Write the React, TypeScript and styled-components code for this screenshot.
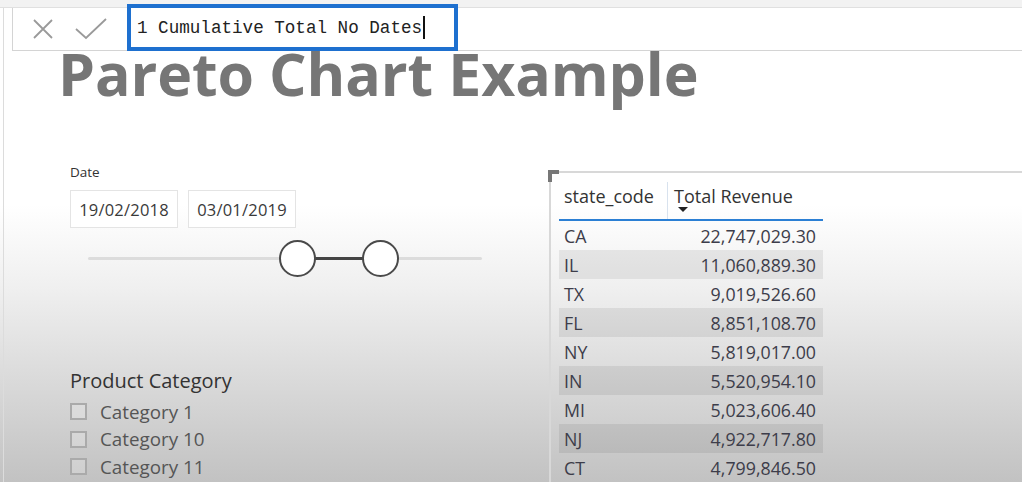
import styled, { createGlobalStyle } from "styled-components";

const GlobalStyle = createGlobalStyle`
	html, body {
		margin: 0;
		padding: 0;
	}
	body {
		width: 1022px;
		height: 482px;
		overflow: hidden;
		font-family: "Open Sans", "Noto Sans", sans-serif;
		background: linear-gradient(
			to bottom,
			#ffffff 0px,
			#ffffff 205px,
			#efefef 290px,
			#c2c2c2 482px
		);
	}
`;

const Page = styled.div`
	display: flex;
	flex-direction: column;
	height: 482px;
	border-left: 1px solid #dcdcdc;
	margin-left: 3px;
`;

const TopStrip = styled.div`
	height: 8px;
	background: #f2f2f2;
	border-bottom: 1px solid #e0e0e0;
	margin-left: -4px;
`;

const FormulaBar = styled.div`
	display: flex;
	align-items: stretch;
	height: 42px;
	margin-left: 8px;
	background: #fff;
	border: 1px solid #d4d4d4;
	border-right: none;
	border-top: none;
`;

const IconButton = styled.div<{ $width: number }>`
	width: ${(p) => p.$width}px;
	display: flex;
	align-items: center;
	justify-content: center;
`;

const FormulaInput = styled.div`
	box-sizing: border-box;
	width: 331px;
	height: 47px;
	margin-top: -4px;
	margin-left: 18px;
	border: 4px solid #1e70cf;
	display: flex;
	align-items: center;
	padding-left: 6px;
	font-family: "Liberation Mono", "DejaVu Sans Mono", monospace;
	font-size: 17.6px;
	line-height: 20px;
	color: #222;
	white-space: pre;
`;

const Caret = styled.span`
	display: inline-block;
	width: 2px;
	height: 23px;
	background: #111;
	margin-left: 1px;
`;

const Canvas = styled.div`
	flex: 1;
	display: flex;
	flex-direction: column;
	padding-left: 54px;
`;

const Title = styled.h1`
	margin: 0;
	font-family: "Open Sans", "Noto Sans", sans-serif;
	font-weight: 700;
	font-size: 59px;
	line-height: 44px;
	letter-spacing: -0.1px;
	color: #767676;
`;

const Body = styled.div`
	display: flex;
	margin-top: 68px;
`;

const LeftPanel = styled.div`
	width: 479px;
	padding-left: 12px;
	display: flex;
	flex-direction: column;
`;

const Label = styled.div`
	font-size: 13.5px;
	color: #333;
	height: 18px;
	line-height: 18px;
`;

const DateRow = styled.div`
	display: flex;
	gap: 10px;
	margin-top: 9px;
`;

const DateBox = styled.div`
	box-sizing: border-box;
	width: 108px;
	height: 38px;
	background: #fff;
	border: 1px solid #e4e4e4;
	display: flex;
	align-items: center;
	justify-content: center;
	font-size: 16.5px;
	letter-spacing: 0.2px;
	color: #3a3a3a;
`;

const SliderWrap = styled.div`
	position: relative;
	margin: 12px 0 0 18px;
	width: 394px;
	height: 38px;
`;

const Track = styled.div`
	position: absolute;
	left: 0;
	right: 0;
	top: 17px;
	height: 3px;
	border-radius: 2px;
	background: #dcdcdc;
`;

const Range = styled.div`
	position: absolute;
	top: 17px;
	height: 3px;
	background: #444;
`;

const Thumb = styled.div`
	position: absolute;
	top: 0;
	box-sizing: border-box;
	width: 37px;
	height: 37px;
	margin-left: -18px;
	border-radius: 50%;
	border: 2px solid #4a4a4a;
	background: #fff;
`;

const CategoryTitle = styled.div`
	margin-top: 91px;
	font-size: 20px;
	color: #333;
	line-height: 24px;
`;

const CategoryList = styled.div`
	display: flex;
	flex-direction: column;
	margin-top: 5px;
`;

const CategoryItem = styled.div`
	display: flex;
	align-items: center;
	gap: 13px;
	height: 27.5px;
	font-size: 18.8px;
	color: #555;
`;

const Box = styled.span`
	box-sizing: border-box;
	width: 17px;
	height: 17px;
	border: 2px solid #aaa;
	background: rgba(255, 255, 255, 0.2);
`;

const TableVisual = styled.div`
	position: relative;
	flex: 1;
	border-top: 2px solid #d8d8d8;
	border-left: 2px solid #d8d8d8;
	padding: 9px 0 0 8px;
	margin-top: 8px;
`;

const Corner = styled.div`
	position: absolute;
	left: -3px;
	top: -3px;
	width: 11px;
	height: 12px;
	border-left: 4px solid #777;
	border-top: 4px solid #777;
	box-sizing: border-box;
`;

const Table = styled.div`
	width: 264px;
	display: flex;
	flex-direction: column;
`;

const HeaderRow = styled.div`
	display: grid;
	grid-template-columns: 108px 1fr;
	height: 37px;
	border-bottom: 2px solid #2b7fd4;
	font-size: 18px;
	color: #333;
`;

const HeaderCell = styled.div<{ $divider?: boolean }>`
	position: relative;
	padding: 2px 0 0 ${(p) => (p.$divider ? 6 : 5)}px;
	border-left: ${(p) => (p.$divider ? "1px solid #d8e2ee" : "none")};
`;

const SortArrow = styled.span`
	position: absolute;
	left: 10px;
	top: 25px;
	width: 0;
	height: 0;
	border-left: 5px solid transparent;
	border-right: 5px solid transparent;
	border-top: 5px solid #222;
`;

const Row = styled.div<{ $shade: boolean }>`
	display: grid;
	grid-template-columns: 108px 1fr;
	height: 29px;
	align-items: center;
	font-size: 17.8px;
	color: #3d3d4a;
	background: ${(p) => (p.$shade ? "rgba(0, 0, 0, 0.07)" : "transparent")};
`;

const Cell = styled.div<{ $right?: boolean }>`
	padding: 0 ${(p) => (p.$right ? 7 : 0)}px 0 ${(p) => (p.$right ? 0 : 5)}px;
	text-align: ${(p) => (p.$right ? "right" : "left")};
`;

const rows: [string, string][] = [
	["CA", "22,747,029.30"],
	["IL", "11,060,889.30"],
	["TX", "9,019,526.60"],
	["FL", "8,851,108.70"],
	["NY", "5,819,017.00"],
	["IN", "5,520,954.10"],
	["MI", "5,023,606.40"],
	["NJ", "4,922,717.80"],
	["CT", "4,799,846.50"],
];

const categories = ["Category 1", "Category 10", "Category 11"];

function CrossIcon() {
	return (
		<svg width="22" height="22" viewBox="0 0 22 22">
			<path d="M2 2 L20 20 M20 2 L2 20" stroke="#9a9a9a" strokeWidth="1.8" fill="none" />
		</svg>
	);
}

function CheckIcon() {
	return (
		<svg width="32" height="22" viewBox="0 0 32 22">
			<path d="M1 11 L11 20 L31 1" stroke="#9a9a9a" strokeWidth="1.8" fill="none" />
		</svg>
	);
}

function App() {
	const start = 209;
	const end = 292;
	return (
		<>
			<GlobalStyle />
			<Page>
				<TopStrip />
				<FormulaBar>
					<IconButton $width={60}>
						<CrossIcon />
					</IconButton>
					<IconButton $width={36}>
						<CheckIcon />
					</IconButton>
					<FormulaInput>
						1 Cumulative Total No Dates
						<Caret />
					</FormulaInput>
				</FormulaBar>
				<Canvas>
					<Title>Pareto Chart Example</Title>
					<Body>
						<LeftPanel>
							<Label>Date</Label>
							<DateRow>
								<DateBox>19/02/2018</DateBox>
								<DateBox>03/01/2019</DateBox>
							</DateRow>
							<SliderWrap>
								<Track />
								<Range style={{ left: start, width: end - start }} />
								<Thumb style={{ left: start }} />
								<Thumb style={{ left: end }} />
							</SliderWrap>
							<CategoryTitle>Product Category</CategoryTitle>
							<CategoryList>
								{categories.map((c) => (
									<CategoryItem key={c}>
										<Box />
										{c}
									</CategoryItem>
								))}
							</CategoryList>
						</LeftPanel>
						<TableVisual>
							<Corner />
							<Table>
								<HeaderRow>
									<HeaderCell>state_code</HeaderCell>
									<HeaderCell $divider>
										Total Revenue
										<SortArrow />
									</HeaderCell>
								</HeaderRow>
								{rows.map(([code, value], i) => (
									<Row key={code} $shade={i % 2 === 1}>
										<Cell>{code}</Cell>
										<Cell $right>{value}</Cell>
									</Row>
								))}
							</Table>
						</TableVisual>
					</Body>
				</Canvas>
			</Page>
		</>
	);
}

export default App;
